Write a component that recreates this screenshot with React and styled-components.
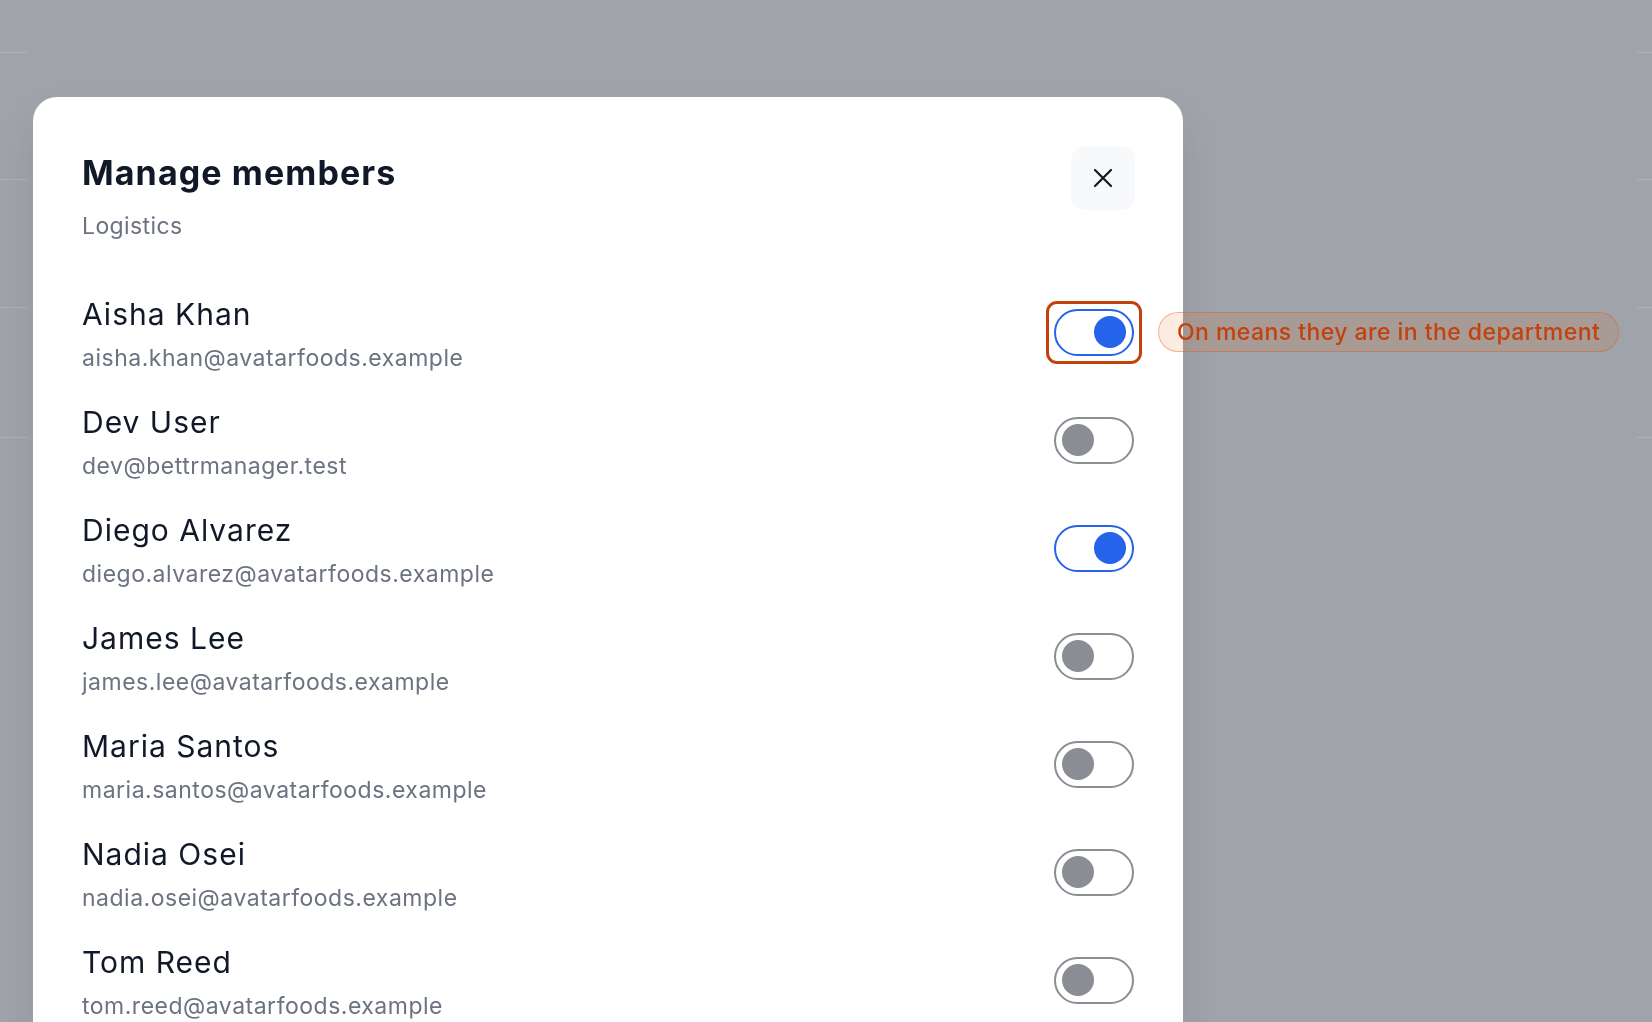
import React from 'react';
import styled, { createGlobalStyle } from 'styled-components';

const GlobalStyle = createGlobalStyle`
  html, body {
    margin: 0;
    padding: 0;
    height: 100%;
    overflow: hidden;
    background: #a0a3a9;
    font-family: Inter, "Noto Sans", "Liberation Sans", sans-serif;
  }
`;

const members = [
  { name: 'Aisha Khan', email: 'aisha.khan@avatarfoods.example', on: true, hint: true },
  { name: 'Dev User', email: 'dev@bettrmanager.test', on: false },
  { name: 'Diego Alvarez', email: 'diego.alvarez@avatarfoods.example', on: true },
  { name: 'James Lee', email: 'james.lee@avatarfoods.example', on: false },
  { name: 'Maria Santos', email: 'maria.santos@avatarfoods.example', on: false },
  { name: 'Nadia Osei', email: 'nadia.osei@avatarfoods.example', on: false },
  { name: 'Tom Reed', email: 'tom.reed@avatarfoods.example', on: false },
];

// page underneath the dim layer, only the ends of its row rules show through
const Backdrop = styled.div`
  position: fixed;
  inset: 0;
  display: flex;
  flex-direction: column;
`;

const BackdropRow = styled.div`
  height: ${(p) => p.h}px;
  flex-shrink: 0;
  display: flex;
  justify-content: space-between;
  align-items: flex-end;
`;

const RuleEnd = styled.div`
  width: ${(p) => p.w}px;
  height: 1px;
  background: rgba(255, 255, 255, 0.14);
`;

const Overlay = styled.div`
  position: fixed;
  inset: 0;
  display: flex;
  align-items: flex-start;
  padding: 97px 0 0 33px;
`;

const Dialog = styled.div`
  width: 1150px;
  box-sizing: border-box;
  background: #ffffff;
  border-radius: 24px;
  padding: 48px 48px 48px 49px;
  box-shadow: 0 20px 40px rgba(17, 24, 39, 0.08);
`;

const Header = styled.div`
  display: flex;
  justify-content: space-between;
  align-items: flex-start;
`;

const HeaderText = styled.div`
  display: flex;
  flex-direction: column;
  padding-top: 7px;
`;

const Title = styled.h2`
  margin: 0;
  font-size: 34px;
  line-height: 42px;
  font-weight: 700;
  color: #111827;
  letter-spacing: 1.1px;
`;

const Subtitle = styled.div`
  margin-top: 17px;
  font-size: 23px;
  line-height: 30px;
  color: #6b7280;
  letter-spacing: 0.4px;
`;

const CloseButton = styled.button`
  width: 64px;
  height: 64px;
  border: none;
  border-radius: 14px;
  background: #f8f9fb;
  display: flex;
  align-items: center;
  justify-content: center;
  padding: 0;
  margin-top: 1px;
  color: #111827;
  cursor: pointer;
`;

const List = styled.div`
  margin-top: 39px;
  display: flex;
  flex-direction: column;
`;

const Row = styled.div`
  display: flex;
  align-items: center;
  justify-content: space-between;
  padding: 15px 0;
  height: 78px;
`;

const Person = styled.div`
  display: flex;
  flex-direction: column;
`;

const Name = styled.div`
  font-size: 30px;
  line-height: 38px;
  color: #111827;
  letter-spacing: 1px;
`;

const Email = styled.div`
  margin-top: 10px;
  font-size: 23px;
  line-height: 30px;
  color: #6b7280;
  letter-spacing: 0.5px;
`;

const SwitchWrap = styled.div`
  position: relative;
  display: flex;
  margin-right: 1px;
  margin-top: -4px;
`;

const Switch = styled.button`
  position: relative;
  width: 80px;
  height: 47px;
  box-sizing: border-box;
  border-radius: 999px;
  border: 2px solid ${(p) => (p.on ? '#2563eb' : '#8b8d93')};
  background: #ffffff;
  padding: 0 6px;
  display: flex;
  align-items: center;
  justify-content: ${(p) => (p.on ? 'flex-end' : 'flex-start')};
  cursor: pointer;
  outline: none;

  &::after {
    content: '';
    display: ${(p) => (p.focused ? 'block' : 'none')};
    position: absolute;
    inset: -10px;
    border: 3px solid #c2410c;
    border-radius: 11px;
  }
`;

const Knob = styled.span`
  width: 32px;
  height: 32px;
  border-radius: 50%;
  background: ${(p) => (p.on ? '#2563eb' : '#8a8d94')};
`;

const Hint = styled.div`
  position: absolute;
  left: calc(100% + 24px);
  top: 50%;
  transform: translateY(-50%);
  white-space: nowrap;
  height: 40px;
  box-sizing: border-box;
  display: flex;
  align-items: center;
  padding: 0 18px;
  border-radius: 999px;
  background: rgba(234, 88, 12, 0.12);
  border: 1.5px solid rgba(234, 88, 12, 0.38);
  color: #c2410c;
  font-size: 23px;
  font-weight: 500;
  letter-spacing: 0.45px;
`;

const CloseIcon = () => (
  <svg width="20" height="20" viewBox="0 0 20 20" fill="none" stroke="currentColor" strokeWidth="2.2" strokeLinecap="round">
    <path d="M2 2 L18 18 M18 2 L2 18" />
  </svg>
);

export default function App() {
  return (
    <>
      <GlobalStyle />
      <Backdrop>
        {[53, 127, 128, 130].map((h, i) => (
          <BackdropRow key={i} h={h}>
            <RuleEnd w={28} />
            <RuleEnd w={16} />
          </BackdropRow>
        ))}
      </Backdrop>
      <Overlay>
        <Dialog role="dialog" aria-label="Manage members">
          <Header>
            <HeaderText>
              <Title>Manage members</Title>
              <Subtitle>Logistics</Subtitle>
            </HeaderText>
            <CloseButton aria-label="Close">
              <CloseIcon />
            </CloseButton>
          </Header>
          <List>
            {members.map((m) => (
              <Row key={m.email}>
                <Person>
                  <Name>{m.name}</Name>
                  <Email>{m.email}</Email>
                </Person>
                <SwitchWrap>
                  <Switch on={m.on} focused={m.hint} role="switch" aria-checked={m.on}>
                    <Knob on={m.on} />
                  </Switch>
                  {m.hint && <Hint>On means they are in the department</Hint>}
                </SwitchWrap>
              </Row>
            ))}
          </List>
        </Dialog>
      </Overlay>
    </>
  );
}
